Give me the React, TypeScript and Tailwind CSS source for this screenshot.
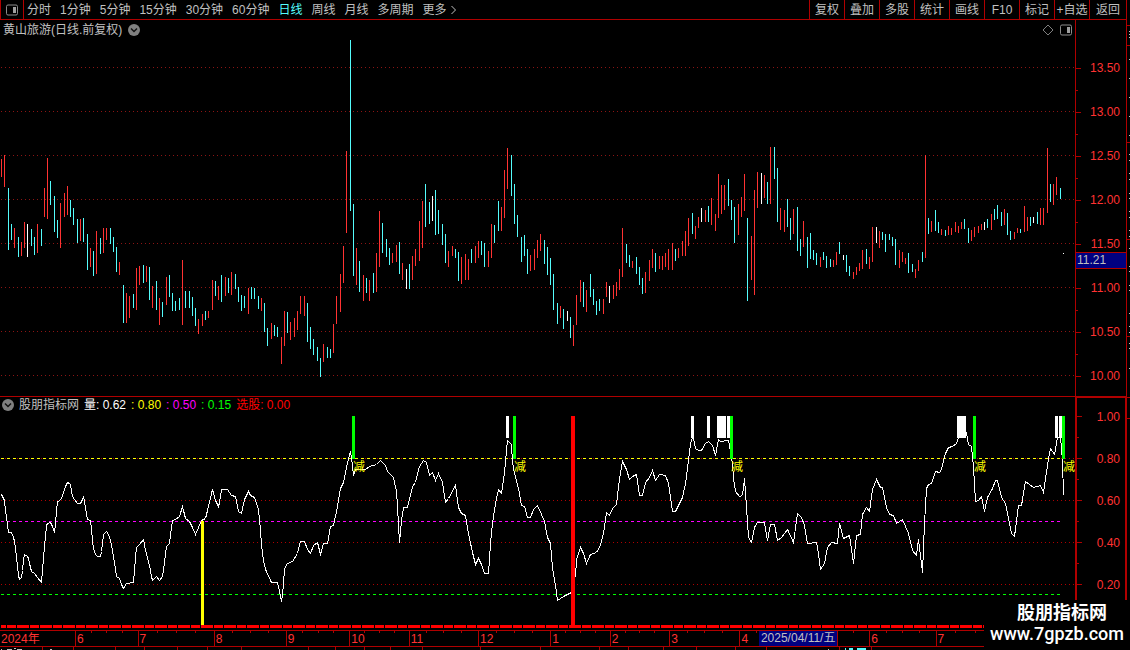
import React, { useState } from "react";

const periods = [
  "分时",
  "1分钟",
  "5分钟",
  "15分钟",
  "30分钟",
  "60分钟",
  "日线",
  "周线",
  "月线",
  "多周期",
  "更多",
];

const tools = ["复权", "叠加", "多股", "统计", "画线", "F10", "标记", "+自选", "返回"];

const barColors: Record<string, string> = {
  r: "#ff3232",
  c: "#54fcfc",
  w: "#ffffff",
};

// colour, x, top, bottom
const bars = `r 1 159 177,r 4 155 187,c 8 188 250,c 11 224 240,r 14 228 248,c 18 237 257,r 21 242 256,r 24 222 248,w 27 224 257,c 31 229 246,
c 34 237 255,r 37 224 253,c 41 229 246,r 44 188 217,r 47 158 219,c 50 181 205,c 54 196 232,c 57 220 238,r 60 203 248,r 64 193 217,
r 67 186 215,c 70 200 217,c 73 208 225,c 77 219 243,r 80 219 241,c 83 218 242,c 87 234 270,r 90 248 267,c 93 251 276,r 96 231 274,
c 100 238 254,r 103 228 253,r 106 228 240,c 110 228 244,c 113 237 252,c 116 247 272,r 119 262 275,c 123 285 323,r 126 293 323,r 129 296 318,
c 133 294 308,r 136 268 310,r 139 266 285,c 143 265 283,r 146 266 282,c 149 267 300,r 152 286 308,c 156 281 310,r 159 298 325,c 162 302 317,
r 166 277 305,c 169 275 297,c 172 293 311,c 175 301 311,c 179 298 310,r 182 260 325,c 185 291 308,c 189 291 308,c 192 297 316,c 195 308 326,
r 198 319 334,r 202 314 326,c 205 311 320,r 208 311 318,r 212 280 310,c 215 281 296,r 218 286 300,c 221 275 302,r 225 277 296,c 228 278 293,
r 231 272 295,c 235 274 289,c 238 287 302,c 241 295 311,c 244 296 308,r 248 288 314,c 251 287 299,c 254 288 299,c 258 296 309,r 261 298 311,
c 264 303 332,c 267 328 346,r 271 323 339,c 274 325 336,c 277 327 337,r 281 337 364,r 284 311 346,c 287 312 333,r 290 322 340,r 294 318 337,
r 297 311 330,r 300 296 314,r 304 296 316,c 307 303 342,c 310 327 349,c 313 339 355,c 317 347 361,c 320 358 377,r 323 344 362,c 327 347 358,
c 330 349 358,r 333 324 353,r 336 296 324,r 340 274 312,r 343 246 283,r 346 151 233,c 350 40 211,c 353 204 276,r 356 248 285,c 359 261 292,
r 363 275 301,c 366 278 293,r 369 280 301,c 373 273 293,r 376 253 292,r 379 211 267,c 382 223 253,c 386 239 257,c 389 248 265,r 392 253 263,
r 396 245 262,c 399 242 274,r 402 263 280,w 406 269 289,c 409 264 289,r 412 256 280,r 415 249 266,r 419 221 261,r 422 201 248,c 425 184 227,
c 429 202 224,w 432 196 221,c 435 190 235,c 438 210 234,c 442 224 245,c 445 234 263,r 448 251 267,r 452 246 256,c 455 249 258,c 458 252 281,
r 461 257 284,r 465 254 280,r 468 259 280,c 471 249 263,r 475 246 263,r 478 241 258,c 481 241 255,c 484 243 267,r 488 251 267,r 491 224 258,
c 494 225 243,c 498 201 231,r 501 207 231,r 504 170 218,r 507 148 189,c 511 155 196,c 514 184 224,c 517 215 237,c 521 237 262,c 524 235 256,
c 527 249 274,r 530 255 271,r 534 249 270,r 537 240 258,r 540 234 251,c 544 240 264,c 547 247 275,c 550 258 285,c 553 274 310,c 557 303 324,
r 560 306 318,c 563 309 329,w 567 311 321,c 570 317 338,r 573 325 346,r 576 295 325,r 580 280 302,c 583 282 307,r 586 290 312,c 590 274 297,
c 593 289 305,c 596 301 315,c 599 299 311,r 603 299 314,r 606 282 297,w 609 286 303,r 613 285 299,r 616 282 296,r 619 269 290,r 622 228 277,
c 626 244 263,c 629 255 267,r 632 261 268,c 636 257 274,c 639 267 285,c 642 278 294,r 645 272 293,r 649 260 281,r 652 249 268,c 655 253 272,
r 659 256 269,r 662 256 270,r 665 253 267,r 668 249 270,r 672 243 270,c 675 249 261,r 678 248 258,r 682 241 256,r 685 231 256,r 688 218 246,
c 692 213 234,r 695 226 239,r 698 217 228,w 701 208 222,r 705 210 222,c 708 206 222,r 711 198 225,r 715 214 231,r 718 174 218,r 721 185 214,
r 724 185 210,c 728 179 206,c 731 200 220,c 734 207 243,r 738 204 235,r 741 197 217,r 744 174 211,c 747 218 301,r 751 236 280,r 754 190 295,
r 757 172 208,w 761 173 204,r 764 175 198,c 767 182 204,r 770 147 204,c 774 147 179,c 777 168 222,r 780 208 230,r 784 210 232,c 787 199 227,
c 790 218 240,r 793 209 234,c 797 207 251,c 800 239 256,r 803 221 247,c 807 237 268,c 810 233 259,c 813 250 260,c 816 253 265,r 820 257 267,
c 823 252 260,c 826 256 268,c 830 259 267,r 833 260 267,r 836 252 265,c 839 242 254,w 843 255 260,c 846 255 272,c 849 266 276,r 853 272 279,
r 856 267 275,r 859 263 271,r 862 250 269,c 866 249 264,r 869 257 269,r 872 227 262,w 876 227 243,r 879 231 248,c 882 232 240,c 885 234 252,
c 889 234 240,c 892 237 246,c 895 239 265,r 899 250 268,r 902 252 262,r 905 258 264,c 908 253 273,c 912 264 272,r 915 269 278,r 918 260 271,
c 922 252 262,r 925 155 258,c 928 218 234,r 931 221 232,c 935 210 231,c 938 222 233,r 941 229 235,c 945 230 236,r 948 226 235,r 951 228 235,
r 955 222 232,r 958 226 233,r 961 222 229,c 964 219 229,c 968 228 243,r 971 230 241,r 974 227 237,r 978 226 233,r 981 224 230,w 984 222 230,
c 987 219 228,r 991 214 230,c 994 209 220,c 997 205 219,c 1001 212 226,r 1004 209 225,c 1007 213 235,c 1010 231 240,r 1014 232 239,r 1017 228 233,
c 1020 229 233,r 1024 206 232,r 1027 217 231,c 1030 217 226,w 1033 217 223,c 1037 212 224,r 1040 208 225,r 1043 208 225,r 1047 148 213,c 1050 184 202,
r 1053 184 205,r 1056 177 195,c 1060 188 199,w 1063 253 254`
  .split(",")
  .map((row) => {
    const [color, x, top, bottom] = row.trim().split(" ");
    return { color, x: +x, top: +top, bottom: +bottom };
  });

// The volume line is broken by the red signal in January
const lineBefore =
  "1,494 3,498 4,500 5,510 6,517 7,524 8,532 11,532 13,537 14,541 15,548 16,556 17,566 18,575 19,579 20,578 21,577 22,570 23,560 24,554 27,556 28,558 29,563 31,571 34,573 37,577 41,582 42,570 43,558 44,545 45,536 46,525 47,523 50,522 52,526 54,532 55,524 56,510 57,501 60,500 62,495 65,486 67,482 69,483 70,484 71,490 72,496 74,499 77,503 80,503 82,499 83,497 84,500 85,508 87,519 90,520 91,528 92,540 93,548 95,554 97,556 100,556 101,551 103,534 106,531 108,534 110,540 112,550 114,562 116,576 119,578 121,584 123,588 126,583 133,582 134,570 135,557 136,547 139,544 143,539 145,550 149,565 151,576 152,580 156,576 159,580 162,576 164,562 166,546 169,543 171,527 172,520 175,519 179,516 182,506 185,518 189,521 192,527 195,534 198,527 201,520 205,518 208,506 212,489 215,500 218,506 219,502 221,489 227,489 231,495 235,496 238,511 241,513 244,499 248,491 250,495 254,497 258,509 260,530 261,545 263,560 265,569 271,582 277,582 279,591 281,601 282,595 283,583 284,568 287,563 292,561 297,553 300,541 304,541 307,549 310,553 313,545 317,542 320,554 323,543 327,543 330,526 333,525 337,506 340,488 343,482 347,462 350,451 352,465 353,475 355,469 365,469 369,466 376,464 380,460 385,465 387,471 393,477 396,491 397,506 399,542 401,520 403,507 407,507 409,499 412,486 415,482 419,466 423,460 426,462 429,475 432,472 435,480 438,473 442,482 445,502 448,498 455,485 458,507 461,513 465,515 468,533 472,552 475,564 478,558 481,564 484,573 488,573 490,543 492,523 495,503 498,489 501,493 504,472 506,450 507,440 511,444 512,462 514,473 518,488 521,505 524,506 527,517 530,517 533,509 537,505 541,514 544,521 547,537 550,543 552,567 555,585 557,600 563,596 571,592";

const lineAfter =
  "575,577 576,559 580,547 583,553 586,563 590,554 596,552 600,545 603,533 606,512 609,515 612,508 616,504 619,478 622,461 626,469 629,479 632,476 636,474 639,495 642,495 645,482 649,477 652,470 655,480 659,474 665,475 668,483 672,511 675,511 682,497 685,483 688,460 690,443 692,437 693,438 695,448 698,450 701,450 705,443 708,441 712,445 715,455 718,439 720,441 728,440 730,451 732,463 733,478 735,491 739,496 742,495 744,478 746,507 748,537 751,542 754,527 757,522 764,522 767,540 770,524 774,524 777,540 781,537 787,529 793,542 797,513 801,517 804,525 807,543 816,542 818,553 820,569 824,563 827,547 831,542 837,543 839,523 843,538 849,535 853,563 856,535 860,534 862,514 866,507 869,511 872,489 876,479 880,487 882,487 886,507 889,514 893,515 896,523 899,521 902,519 908,533 912,550 916,555 918,539 922,572 924,523 926,488 928,484 931,483 935,471 939,472 941,469 945,453 948,447 952,446 956,443 958,437 964,437 966,433 968,444 971,446 973,467 975,501 978,500 981,496 984,511 987,497 992,488 995,480 997,480 1001,497 1005,503 1008,518 1011,533 1014,536 1018,505 1021,505 1025,481 1033,487 1040,485 1043,492 1048,458 1050,448 1054,454 1057,437 1060,436 1062,460 1063,495";

const whiteBlocks = [
  [506, 3],
  [691, 3],
  [707, 3],
  [717, 9],
  [727, 3],
  [957, 9],
  [1055, 3],
  [1059, 3],
];

const reduceSignals = [352, 513, 730, 973, 1062];

const prices = ["13.50", "13.00", "12.50", "12.00", "11.50", "11.00", "10.50", "10.00"];
const levels = ["1.00", "0.80", "0.60", "0.40", "0.20"];

const months = [
  { label: "2024年", days: 76, ticks: 0 },
  { label: "6", days: 62, ticks: 3 },
  { label: "7", days: 76, ticks: 3 },
  { label: "8", days: 72, ticks: 3 },
  { label: "9", days: 63, ticks: 3 },
  { label: "10", days: 59, ticks: 3 },
  { label: "11", days: 69, ticks: 3 },
  { label: "12", days: 72, ticks: 3 },
  { label: "1", days: 59, ticks: 3 },
  { label: "2", days: 59, ticks: 3 },
  { label: "3", days: 70, ticks: 3 },
  { label: "4", days: 131, ticks: 7 },
  { label: "6", days: 66, ticks: 3 },
  { label: "7", days: 141, ticks: 6 },
];

const PanelIcon = () => (
  <svg width="12" height="12" viewBox="0 0 12 12" aria-hidden="true">
    <rect x="0.5" y="1" width="11" height="10" rx="1.5" fill="none" stroke="#8c8c8c" />
    <rect x="7" y="3" width="3" height="6" fill="#a0a0a0" />
  </svg>
);

const DropIcon = () => (
  <svg width="12" height="12" viewBox="0 0 12 12" aria-hidden="true">
    <circle cx="6" cy="6" r="6" fill="#808080" />
    <path d="M3 4.5 L6 7.5 L9 4.5" fill="none" stroke="#111111" strokeWidth="1.5" />
  </svg>
);

const Axis = ({ labels }: { labels: string[] }) => (
  <>
    {labels.map((label, i) => (
      <React.Fragment key={label}>
        <div className="flex h-full items-center justify-between pr-[5px]">
          <span className="h-px w-[5px] bg-[#b00000]" />
          <span className="leading-4">{label}</span>
        </div>
        {i < labels.length - 1 && (
          <div className="flex h-full items-center">
            <span className="h-px w-[2px] bg-[#b00000]" />
          </div>
        )}
      </React.Fragment>
    ))}
  </>
);

const PriceChart = () => (
  <svg
    className="block h-[356px] w-full"
    viewBox="0 40 1075 356"
    preserveAspectRatio="none"
    shapeRendering="crispEdges"
  >
    {prices.map((price, i) => (
      <line
        key={price}
        x1="1"
        x2="1075"
        y1={67.5 + i * 44}
        y2={67.5 + i * 44}
        stroke="#8c1414"
        strokeDasharray="1 3"
      />
    ))}
    {bars.map((bar) => (
      <rect
        key={bar.x}
        x={bar.x}
        y={bar.top}
        width="1"
        height={bar.bottom - bar.top}
        fill={barColors[bar.color]}
      />
    ))}
  </svg>
);

const VolumeChart = () => (
  <div className="relative">
    <svg
      className="block h-[217px] w-full"
      viewBox="0 413 1075 217"
      preserveAspectRatio="none"
      shapeRendering="crispEdges"
    >
      {[458, 500, 542, 584].map((y) => (
        <line
          key={y}
          x1="1"
          x2="1075"
          y1={y + 0.5}
          y2={y + 0.5}
          stroke="#b00000"
          strokeDasharray="1 3"
        />
      ))}
      <g strokeDasharray="3 3">
        <line x1="1" x2="1060" y1="458.5" y2="458.5" stroke="#ffff00" />
        <line x1="1" x2="1060" y1="521.5" y2="521.5" stroke="#ff00ff" />
        <line x1="1" x2="1060" y1="594.5" y2="594.5" stroke="#00ff00" />
      </g>
      <g fill="none" stroke="#ffffff" transform="translate(0.5 0.5)">
        <polyline points={lineBefore} />
        <polyline points={lineAfter} />
      </g>
      {whiteBlocks.map(([x, width]) => (
        <rect key={x} x={x} y="416" width={width} height="22" fill="#ffffff" />
      ))}
      {reduceSignals.map((x) => (
        <rect key={x} x={x} y="416" width="3" height="43" fill="#00ff00" />
      ))}
      <line
        x1="1"
        x2="1064"
        y1="626.5"
        y2="626.5"
        stroke="#ff0000"
        strokeWidth="3"
        strokeDasharray="12 1 9 1"
        strokeDashoffset="7"
      />
      <rect x="201" y="521" width="3" height="104" fill="#ffff00" />
      <rect x="571" y="416" width="4" height="210" fill="#ff0000" />
    </svg>
    {reduceSignals.map((x) => (
      <span
        key={x}
        className="absolute top-[46px] text-xs leading-4 text-[#ffff00]"
        style={{ left: `${((x + 1) / 1075) * 100}%` }}
      >
        减
      </span>
    ))}
  </div>
);

const App = () => {
  const [period, setPeriod] = useState("日线");

  return (
    <div className="relative flex min-h-screen items-stretch overflow-hidden bg-black font-['Liberation_Sans','Noto_Sans_CJK_SC',sans-serif] text-xs text-[#c0c0c0]">
      <div className="relative min-w-0 flex-1">
        <header className="flex h-5 justify-between border-b border-[#b00000]">
          <nav className="flex items-center gap-[9px]">
            <button
              type="button"
              aria-label="侧栏"
              className="-mr-[6px] flex h-full w-6 items-center justify-center border-x border-[#b00000]"
            >
              <PanelIcon />
            </button>
            {periods.map((item) => (
              <button
                key={item}
                type="button"
                onClick={() => setPeriod(item)}
                className={
                  item === period
                    ? "whitespace-nowrap leading-4 text-[#54fcfc]"
                    : "whitespace-nowrap leading-4"
                }
              >
                {item}
                {item === "更多" && (
                  <svg className="ml-1 inline-block" width="6" height="10" viewBox="0 0 6 10" aria-hidden="true">
                    <path d="M0.5 1 L4.5 5 L0.5 9" fill="none" stroke="#c0c0c0" />
                  </svg>
                )}
              </button>
            ))}
          </nav>
          <div className="flex">
            {tools.map((tool) => (
              <button
                key={tool}
                type="button"
                className="w-[35px] whitespace-nowrap border-l border-[#b00000] text-center leading-4 last:w-[37px]"
              >
                {tool}
              </button>
            ))}
          </div>
        </header>

        <section className="flex border-b border-[#b00000]">
          <div className="min-w-0 flex-1">
            <div className="flex h-5 items-center justify-between px-[3px]">
              <h1 className="flex items-center gap-[6px] leading-4">
                黄山旅游(日线.前复权)
                <DropIcon />
              </h1>
              <div className="flex items-center gap-[6px]">
                <svg width="12" height="12" viewBox="0 0 12 12" aria-hidden="true">
                  <path d="M6 1 L11 6 L6 11 L1 6 Z" fill="none" stroke="#808080" />
                </svg>
                <PanelIcon />
              </div>
            </div>
            <PriceChart />
          </div>
          <div className="relative grid w-[51px] auto-rows-[22px] content-start border-l border-[#b00000] pr-px pt-[37px] text-[#ff3232]">
            <Axis labels={prices} />
            <span className="absolute inset-x-0 top-[232px] border-y border-[#b00000] bg-[#000080] pl-px leading-[15px] text-[#c0c0c0]">
              11.21
            </span>
          </div>
        </section>

        <section className="flex">
          <div className="min-w-0 flex-1">
            <div className="flex h-4 items-center gap-[5px] pl-[2px] leading-4">
              <DropIcon />
              <span>股朋指标网</span>
              <span className="text-white">量: 0.62</span>
              <span className="text-[#ffff00]">: 0.80</span>
              <span className="text-[#ff00ff]">: 0.50</span>
              <span className="text-[#00ff00]">: 0.15</span>
              <span className="text-[#ff0000]">选股: 0.00</span>
            </div>
            <VolumeChart />
          </div>
          <div className="grid w-[51px] auto-rows-[21px] content-start border-l-2 border-r border-t border-[#b00000] pt-[8px] text-[#ff3232]">
            <Axis labels={levels} />
          </div>
        </section>

        <div className="relative flex h-[17px] border-y border-[#b00000] pr-[51px] text-[#ff3232]">
          {months.map((month, i) => (
            <div
              key={i}
              className="relative basis-0 border-l border-[#b00000] pl-px leading-4 first:border-l-0"
              style={{ flexGrow: month.days }}
            >
              {month.label}
              <div className="absolute inset-x-0 top-0 flex justify-evenly">
                {Array.from({ length: month.ticks }, (_, t) => (
                  <span key={t} className="h-[2px] w-px bg-[#b00000]" />
                ))}
              </div>
            </div>
          ))}
          <span className="absolute left-[67.4%] top-0 h-[15px] border-r border-[#b00000] bg-[#000080] px-[2px] leading-[15px] text-[#c0c0c0]">
            2025/04/11/五
          </span>
        </div>

        <svg className="block h-[3px] w-full" viewBox="0 0 1126 3" preserveAspectRatio="none" shapeRendering="crispEdges">
          {[42, 73, 115, 144, 177, 207, 241, 308, 335, 364, 390, 422, 480, 540, 599, 628, 663, 696, 735, 766, 839, 871].map((x) => (
            <rect key={x} x={x} y="0" width="1" height="3" fill="#b00000" />
          ))}
          <path d="M7 2h5M14 1h2M17 2h5M50 2h2M828 2h1M1 2h1" stroke="#c0c0c0" />
          <path d="M845 2h1M849 2h4M857 2h9" stroke="#54fcfc" strokeWidth="2" />
        </svg>
      </div>

      <svg className="h-[650px] w-1 shrink-0" viewBox="0 0 4 650" shapeRendering="crispEdges" aria-hidden="true">
        <rect width="1" height="650" fill="#b00000" />
        {[25, 45, 142, 239, 336, 397, 418].map((y) => (
          <rect key={y} x="1" y={y} width="3" height="1" fill="#b00000" />
        ))}
        {[31, 34, 37, 59, 78, 97, 116, 135, 154, 160, 173, 179, 193, 198, 211, 217, 230, 236, 248, 266, 271, 285, 290, 313, 326, 332, 343, 348, 368].map((y) => (
          <rect key={y} x="3" y={y} width="1" height="1" fill="#c0c0c0" />
        ))}
      </svg>

      <a
        href="#"
        className="absolute bottom-0 right-0 flex h-[50px] w-[146px] flex-col items-center bg-black pt-[2px] text-white"
      >
        <span className="pl-[10px] text-lg font-bold leading-[22px]">股朋指标网</span>
        <span className="font-[Roboto,sans-serif] text-lg font-medium leading-5">
          www.7gpzb.com
        </span>
      </a>
    </div>
  );
};

export default App;
